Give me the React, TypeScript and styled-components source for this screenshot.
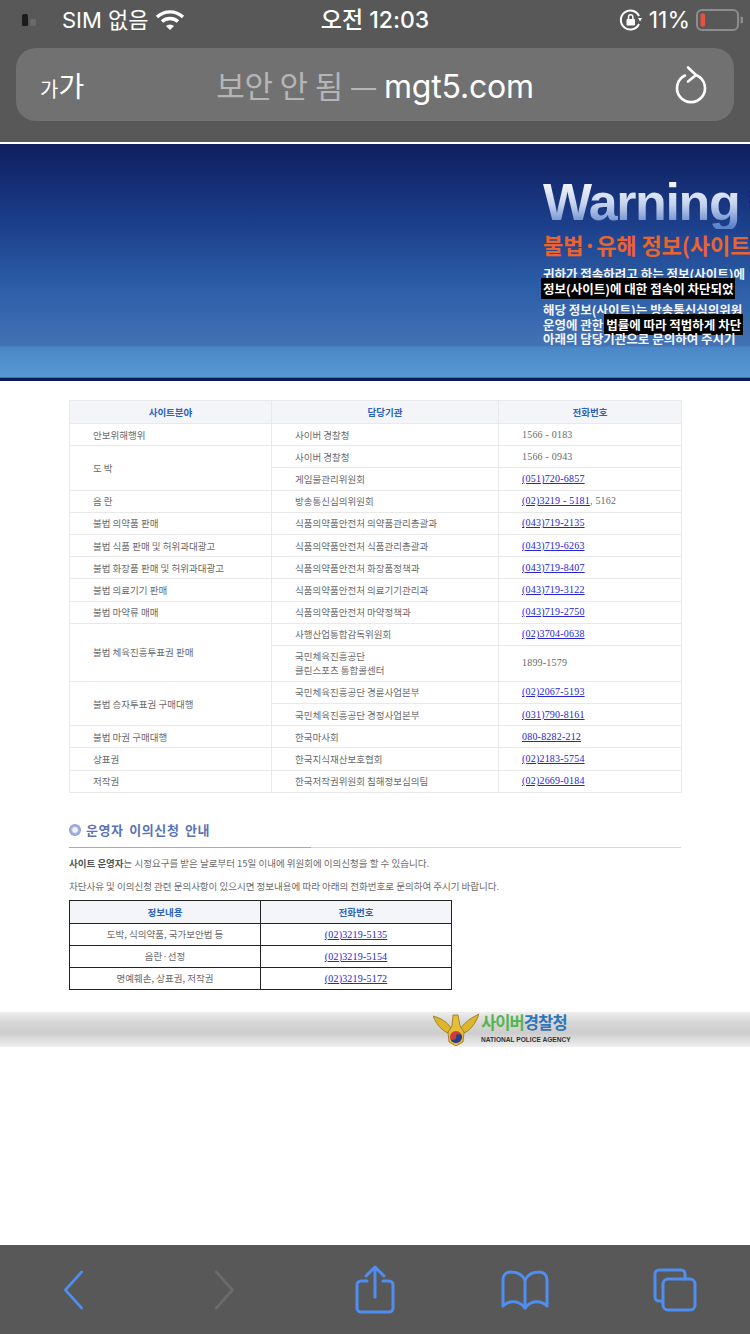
import styled, { createGlobalStyle } from "styled-components";

const GlobalStyle = createGlobalStyle`
  html, body {
    margin: 0;
    padding: 0;
    background: #fff;
  }
`;

const KR = `"Noto Sans CJK KR", "Noto Sans", sans-serif`;
const UI = `Inter, "Noto Sans CJK KR", sans-serif`;
const SERIF = `"Liberation Serif", serif`;

const Phone = styled.div`
  width: 750px;
  height: 1334px;
  display: flex;
  flex-direction: column;
  overflow: hidden;
  background: #fff;
`;

const Chrome = styled.header`
  height: 142px;
  flex: none;
  box-sizing: border-box;
  padding: 0 16px;
  background: #585858;
  border-bottom: 0;
  display: flex;
  flex-direction: column;
`;

const StatusBar = styled.div`
  height: 48px;
  display: grid;
  grid-template-columns: 1fr auto 1fr;
  align-items: center;
  color: #fff;
  font-family: ${UI};
  font-size: 23px;
  line-height: 40px;
  padding-bottom: 8px;
  box-sizing: border-box;
`;

const StatusLeft = styled.div`
  display: flex;
  align-items: center;
  gap: 6px;
  margin-left: 6px;
`;

const Carrier = styled.span`
  margin-left: 12px;
  font-size: 22px;
  white-space: nowrap;
`;

const Clock = styled.div`
  font-size: 23px;
  font-weight: 500;
`;

const StatusRight = styled.div`
  display: flex;
  justify-content: flex-end;
  align-items: center;
  gap: 6px;
  margin-right: -9px;
`;

const Percent = styled.span`
  font-size: 23px;
`;

const UrlBar = styled.div`
  height: 73px;
  border-radius: 20px;
  background: #717171;
  display: grid;
  grid-template-columns: 100px 1fr 100px;
  align-items: center;
  color: #fff;
`;

const ReaderButton = styled.div`
  padding-left: 24px;
  font-family: ${KR};
  display: flex;
  align-items: baseline;
`;

const SmallGa = styled.span`
  font-size: 20px;
`;

const BigGa = styled.span`
  font-size: 28px;
`;

const Address = styled.div`
  text-align: center;
  font-family: ${UI};
  font-size: 32px;
  white-space: nowrap;
  letter-spacing: -0.2px;
`;

const NotSecure = styled.span`
  font-family: ${KR};
  font-size: 31px;
  color: #b5b5b5;
`;

const Reload = styled.div`
  display: flex;
  justify-content: flex-end;
  padding-right: 26px;
`;

const Page = styled.main`
  flex: 1;
  border-top: 2px solid #fff;
  min-height: 0;
  overflow: hidden;
  background: #fff;
`;

const Banner = styled.section`
  height: 234px;
  box-sizing: border-box;
  overflow: hidden;
  position: relative;
  padding: 31px 0 0 543px;
  white-space: nowrap;
  background: linear-gradient(
    180deg,
    #101f5e 0%,
    #1a3a86 30%,
    #2d5ea8 62%,
    #4372b4 86%,
    #4a87c6 87%,
    #579ad2 100%
  );
  &::after {
    content: "";
    position: absolute;
    inset: auto 0 0 0;
    height: 1px;
    background: #5d6f8d;
  }
`;

const BannerEdge = styled.div`
  height: 3px;
  background: #0e1b5b;
`;

const WarningRow = styled.div`
  display: flex;
  align-items: flex-start;
  gap: 8px;
  height: 54px;
`;

const WarningWord = styled.div`
  font-family: "Liberation Sans", sans-serif;
  font-weight: 700;
  font-size: 52px;
  line-height: 54px;
  letter-spacing: -1.4px;
  background: linear-gradient(180deg, #f4f7fc 15%, #c3d2ec 55%, #5d83cb 95%);
  -webkit-background-clip: text;
  background-clip: text;
  color: transparent;
`;

const WaveMark = styled.svg`
  margin-top: 12px;
  flex: none;
`;

const BannerTitle = styled.h1`
  margin: 0;
  font-family: ${KR};
  font-size: 22px;
  line-height: 30px;
  font-weight: 700;
  color: #ea6430;
  letter-spacing: -0.1px;
`;

const Notice = styled.div`
  font-family: ${KR};
  font-size: 12.5px;
  line-height: 14.5px;
  font-weight: 700;
  color: #f2f5fb;
  margin-top: ${(p: { $gap: number }) => p.$gap}px;
`;

const NoticeLine = styled.div`
  height: 14.5px;
`;

const Highlight = styled.span`
  background: #000;
  color: #fff;
  padding: 1px 2px;
  margin-left: -2px;
`;

const Body = styled.div`
  padding: 19px 69px 0;
`;

const Table = styled.table`
  border-collapse: collapse;
  table-layout: fixed;
  font-family: ${KR};
  color: #6a6a6a;
  width: 612px;
  font-size: 9.5px;
`;

const Heading = styled.th`
  height: 22px;
  padding: 0;
  background: #f4f5f9;
  border: 1px solid #e9e9e9;
  color: #2a63bd;
  font-size: 9.5px;
  font-weight: 700;
  text-align: center;
`;

const Cell = styled.td`
  height: 21.2px;
  padding: 0 0 0 23px;
  border: 1px solid #e9e9e9;
  line-height: 14px;
  white-space: nowrap;
`;

const PhoneCell = styled(Cell)`
  font-family: ${SERIF};
  font-size: 10px;
  letter-spacing: 0.2px;
`;

const Tel = styled.a`
  color: #2424d8;
  text-decoration: underline;
`;

const Section = styled.section`
  padding-top: 25px;
`;

const SectionTitle = styled.h2`
  margin: 0;
  height: 24px;
  display: flex;
  align-items: center;
  gap: 5px;
  font-family: ${KR};
  font-size: 13px;
  font-weight: 700;
  letter-spacing: 0.6px;
  color: #5a73b8;
  word-spacing: 2px;
  border-bottom: 1px solid #d8d8d8;
  position: relative;
  padding-bottom: 5px;
  &::after {
    content: "";
    position: absolute;
    left: 0;
    bottom: -1px;
    width: 242px;
    height: 1px;
    background: #9aa9da;
  }
`;

const Bullet = styled.span`
  width: 12px;
  height: 12px;
  border-radius: 50%;
  flex: none;
  background: radial-gradient(circle at 50% 50%, #f4f5fb 0 25%, #a4aede 45%, #7f8bc6 100%);
`;

const Para = styled.p`
  margin: 0;
  font-family: ${KR};
  font-size: 9.5px;
  line-height: 14px;
  color: #6a6a6a;
  white-space: nowrap;
  margin-top: ${(p: { $top: number }) => p.$top}px;
`;

const ParaLead = styled.strong`
  color: #555;
`;

const NoteTable = styled.table`
  border-collapse: collapse;
  table-layout: fixed;
  width: 383px;
  margin-top: 7px;
  font-family: ${KR};
  font-size: 9.5px;
  color: #6a6a6a;
`;

const NoteHeading = styled.th`
  height: 22px;
  padding: 0;
  background: #f4f5f9;
  border: 1px solid #222;
  color: #2a63bd;
  font-size: 9.5px;
  font-weight: 700;
`;

const NoteCell = styled.td`
  height: 21px;
  padding: 0;
  border: 1px solid #222;
  text-align: center;
`;

const NotePhone = styled(NoteCell)`
  font-family: ${SERIF};
  font-size: 10px;
  letter-spacing: 0.2px;
`;

const AgencyStrip = styled.footer`
  margin-top: 22px;
  height: 35px;
  background: linear-gradient(180deg, #eeeeee 0%, #d6d6d6 30%, #cdcdcd 60%, #efefef 100%);
  display: flex;
  justify-content: flex-end;
  padding-right: 187px;
  gap: 2px;
  align-items: flex-start;
`;

const AgencyText = styled.div`
  display: flex;
  flex-direction: column;
  width: 82px;
`;

const AgencyName = styled.div`
  font-family: ${KR};
  font-size: 16.5px;
  line-height: 20px;
  font-weight: 700;
  letter-spacing: -0.9px;
  white-space: nowrap;
`;

const Green = styled.span`
  color: #52b553;
`;

const Blue = styled.span`
  color: #2f76b8;
`;

const AgencyEnglish = styled.div`
  font-family: "Liberation Sans", sans-serif;
  font-size: 6.6px;
  line-height: 10px;
  font-weight: 700;
  color: #333;
  white-space: nowrap;
  margin-top: 3px;
`;

const Toolbar = styled.nav`
  height: 89px;
  flex: none;
  background: #585858;
  display: grid;
  grid-template-columns: repeat(5, 1fr);
  align-items: center;
  justify-items: center;
  padding: 0 0 0 0;
  box-sizing: border-box;
`;

const ToolIcon = styled.svg`
  display: block;
  fill: none;
  stroke: ${(p: { $off?: boolean }) => (p.$off ? "#6b6b6b" : "#4f8ef0")};
  stroke-width: 3;
  stroke-linecap: round;
  stroke-linejoin: round;
`;

const rows = [
  { field: "안보위해행위", span: 1, org: "사이버 경찰청", tel: "1566 - 0183", plain: true },
  { field: "도 박", span: 2, org: "사이버 경찰청", tel: "1566 - 0943", plain: true },
  { org: "게임물관리위원회", tel: "(051)720-6857" },
  { field: "음 란", span: 1, org: "방송통신심의위원회", tel: "(02)3219 - 5181", extra: ", 5162" },
  { field: "불법 의약품 판매", span: 1, org: "식품의약품안전처 의약품관리총괄과", tel: "(043)719-2135" },
  { field: "불법 식품 판매 및 허위과대광고", span: 1, org: "식품의약품안전처 식품관리총괄과", tel: "(043)719-6263" },
  { field: "불법 화장품 판매 및 허위과대광고", span: 1, org: "식품의약품안전처 화장품정책과", tel: "(043)719-8407" },
  { field: "불법 의료기기 판매", span: 1, org: "식품의약품안전처 의료기기관리과", tel: "(043)719-3122" },
  { field: "불법 마약류 매매", span: 1, org: "식품의약품안전처 마약정책과", tel: "(043)719-2750" },
  { field: "불법 체육진흥투표권 판매", span: 2, org: "사행산업통합감독위원회", tel: "(02)3704-0638" },
  { org: "국민체육진흥공단\n클린스포츠 통합콜센터", tel: "1899-1579", plain: true },
  { field: "불법 승자투표권 구매대행", span: 2, org: "국민체육진흥공단 경륜사업본부", tel: "(02)2067-5193" },
  { org: "국민체육진흥공단 경정사업본부", tel: "(031)790-8161" },
  { field: "불법 마권 구매대행", span: 1, org: "한국마사회", tel: "080-8282-212" },
  { field: "상표권", span: 1, org: "한국지식재산보호협회", tel: "(02)2183-5754" },
  { field: "저작권", span: 1, org: "한국저작권위원회 침해정보심의팀", tel: "(02)2669-0184" },
];

const notes = [
  { label: "도박, 식의약품, 국가보안법 등", tel: "(02)3219-5135" },
  { label: "음란·선정", tel: "(02)3219-5154" },
  { label: "명예훼손, 상표권, 저작권", tel: "(02)3219-5172" },
];

const App = () => {
  return (
    <Phone>
      <GlobalStyle />
      <Chrome>
        <StatusBar>
          <StatusLeft>
            <svg width="22" height="14" viewBox="0 0 22 14">
              <rect x="0" y="1" width="6" height="12" rx="1.5" fill="#1c1c1c" />
              <rect x="8" y="6" width="6" height="7" rx="1.5" fill="#6a6a6a" />
            </svg>
            <Carrier>SIM 없음</Carrier>
            <svg width="30" height="22" viewBox="0 0 30 22">
              <path d="M2 8 A19 19 0 0 1 28 8" fill="none" stroke="#fff" strokeWidth="3.4" />
              <path d="M7 12.5 A12 12 0 0 1 23 12.5" fill="none" stroke="#fff" strokeWidth="3.4" />
              <path d="M11 17 A6 6 0 0 1 19 17 L15 21 Z" fill="#fff" />
            </svg>
          </StatusLeft>
          <Clock>오전 12:03</Clock>
          <StatusRight>
            <svg width="24" height="24" viewBox="0 0 24 24" fill="none">
              <path d="M20 16 A9.5 9.5 0 1 1 20 8" stroke="#fff" strokeWidth="2" />
              <path d="M19 10 L23 10 L21 13.5 Z" fill="#fff" />
              <rect x="7.5" y="11" width="8.5" height="6.5" rx="1" fill="#fff" />
              <path d="M9.5 11 V9 a2.2 2.2 0 0 1 4.4 0 V11" stroke="#fff" strokeWidth="1.5" />
            </svg>
            <Percent>11%</Percent>
            <svg width="47" height="24" viewBox="0 0 47 24" fill="none">
              <rect x="1" y="2" width="41" height="20" rx="5" stroke="#8d8d8d" strokeWidth="2" />
              <rect x="4.5" y="5.5" width="4.5" height="13" rx="1.5" fill="#e8503f" />
              <path d="M44.5 8.5 a3 3 0 0 1 0 7 Z" fill="#8d8d8d" />
            </svg>
          </StatusRight>
        </StatusBar>
        <UrlBar>
          <ReaderButton>
            <SmallGa>가</SmallGa>
            <BigGa>가</BigGa>
          </ReaderButton>
          <Address>
            <NotSecure>보안 안 됨 — </NotSecure>mgt5.com
          </Address>
          <Reload>
            <svg width="34" height="40" viewBox="0 0 34 40" fill="none" stroke="#fff" strokeWidth="2.6" strokeLinecap="round" strokeLinejoin="round">
              <path d="M11 10.5 A14 14 0 1 0 23 10.5" />
              <path d="M14 2.5 L22 10 L14 16.5" />
            </svg>
          </Reload>
        </UrlBar>
      </Chrome>
      <Page>
        <Banner>
          <WarningRow>
            <WarningWord>Warning</WarningWord>
            <WaveMark width="60" height="28" viewBox="0 0 60 28" fill="none" stroke="#14237e" strokeWidth="1.8">
              <path d="M2 5 C12 3 22 6 29 18" />
              <path d="M2 10 C10 8 18 10 24 20" />
              <path d="M2 15 C8 14 14 16 18 23" />
              <path d="M2 20 C6 20 10 21 13 25" />
              <path d="M25 2 C30 8 36 13 48 14" />
              <path d="M29 20 C36 13 46 12 60 14" />
              <path d="M36 22 C42 18 50 18 60 20" />
            </WaveMark>
          </WarningRow>
          <BannerTitle>불법·유해 정보(사이트</BannerTitle>
          <Notice $gap={8}>
            <NoticeLine>귀하가 접속하려고 하는 정보(사이트)에</NoticeLine>
            <NoticeLine>
              <Highlight>정보(사이트)에 대한 접속이 차단되었</Highlight>
            </NoticeLine>
          </Notice>
          <Notice $gap={7}>
            <NoticeLine>해당 정보(사이트)는 방송통신심의위원</NoticeLine>
            <NoticeLine>
              운영에 관한 <Highlight>법률에 따라 적법하게 차단</Highlight>
            </NoticeLine>
            <NoticeLine>아래의 담당기관으로 문의하여 주시기</NoticeLine>
          </Notice>
        </Banner>
        <BannerEdge />
        <Body>
          <Table>
            <colgroup>
              <col width="202" />
              <col width="227" />
              <col width="183" />
            </colgroup>
            <thead>
              <tr>
                <Heading>사이트분야</Heading>
                <Heading>담당기관</Heading>
                <Heading>전화번호</Heading>
              </tr>
            </thead>
            <tbody>
              {rows.map((row) => (
                <tr key={row.org + row.tel}>
                  {row.field && <Cell rowSpan={row.span}>{row.field}</Cell>}
                  <Cell style={row.org.includes("\n") ? { whiteSpace: "pre-line", height: 35 } : undefined}>
                    {row.org}
                  </Cell>
                  <PhoneCell>
                    {row.plain ? row.tel : <Tel href="#">{row.tel}</Tel>}
                    {row.extra}
                  </PhoneCell>
                </tr>
              ))}
            </tbody>
          </Table>
          <Section>
            <SectionTitle>
              <Bullet />
              운영자 이의신청 안내
            </SectionTitle>
            <Para $top={8}>
              <ParaLead>사이트 운영자</ParaLead>는 시정요구를 받은 날로부터 15일 이내에 위원회에 이의신청을 할 수 있습니다.
            </Para>
            <Para $top={9}>
              차단사유 및 이의신청 관련 문의사항이 있으시면 정보내용에 따라 아래의 전화번호로 문의하여 주시기 바랍니다.
            </Para>
            <NoteTable>
              <thead>
                <tr>
                  <NoteHeading>정보내용</NoteHeading>
                  <NoteHeading>전화번호</NoteHeading>
                </tr>
              </thead>
              <tbody>
                {notes.map((note) => (
                  <tr key={note.tel}>
                    <NoteCell>{note.label}</NoteCell>
                    <NotePhone>
                      <Tel href="#">{note.tel}</Tel>
                    </NotePhone>
                  </tr>
                ))}
              </tbody>
            </NoteTable>
          </Section>
        </Body>
        <AgencyStrip>
          <svg width="46" height="34" viewBox="0 0 46 34">
            <path d="M0 4 C8 6 14 10 18 16 L20 22 C12 22 4 14 0 4 Z" fill="#e0b52c" stroke="#8a7420" strokeWidth="0.8" />
            <path d="M46 2 C38 6 32 10 28 16 L26 22 C34 22 42 14 46 2 Z" fill="#e0b52c" stroke="#8a7420" strokeWidth="0.8" />
            <path d="M20 3 L25 3 L27 14 L31 20 L30 30 L23 34 L16 30 L15 20 L19 14 Z" fill="#e6bf35" stroke="#8a7420" strokeWidth="0.8" />
            <circle cx="23" cy="25" r="6" fill="#d33a3a" />
            <path d="M17 25 A6 6 0 0 0 29 25 A3 3 0 0 0 23 25 A3 3 0 0 1 17 25 Z" fill="#25408f" />
          </svg>
          <AgencyText>
            <AgencyName>
              <Green>사이버</Green>
              <Blue>경찰청</Blue>
            </AgencyName>
            <AgencyEnglish>NATIONAL POLICE AGENCY</AgencyEnglish>
          </AgencyText>
        </AgencyStrip>
      </Page>
      <Toolbar>
        <ToolIcon width="30" height="44" viewBox="0 0 30 44">
          <path d="M24 4 L6 22 L24 40" transform="translate(0 0) scale(0.9 1)" />
        </ToolIcon>
        <ToolIcon $off width="30" height="44" viewBox="0 0 30 44">
          <path d="M7 4 L25 22 L7 40" transform="scale(0.9 1)" />
        </ToolIcon>
        <ToolIcon width="42" height="50" viewBox="0 0 42 50">
          <path d="M13 16 H7 a4 4 0 0 0 -4 4 V43 a4 4 0 0 0 4 4 H35 a4 4 0 0 0 4 -4 V20 a4 4 0 0 0 -4 -4 H29" />
          <path d="M21 32 V2 M12 11 L21 2 L30 11" />
        </ToolIcon>
        <ToolIcon width="50" height="40" viewBox="0 0 50 40">
          <path d="M25 10 C22 4 16 2 11 2 C6 2 3 5 3 10 V36 C9 30 19 30 25 38 C31 30 41 30 47 36 V10 C47 5 44 2 39 2 C34 2 28 4 25 10 Z" />
          <path d="M25 10 V38" />
        </ToolIcon>
        <ToolIcon width="46" height="46" viewBox="0 0 46 46">
          <path d="M33 12 V7 a4 4 0 0 0 -4 -4 H7 a4 4 0 0 0 -4 4 V30 a4 4 0 0 0 4 4 H11" />
          <rect x="11" y="12" width="32" height="31" rx="5" />
        </ToolIcon>
      </Toolbar>
    </Phone>
  );
};

export default App;
